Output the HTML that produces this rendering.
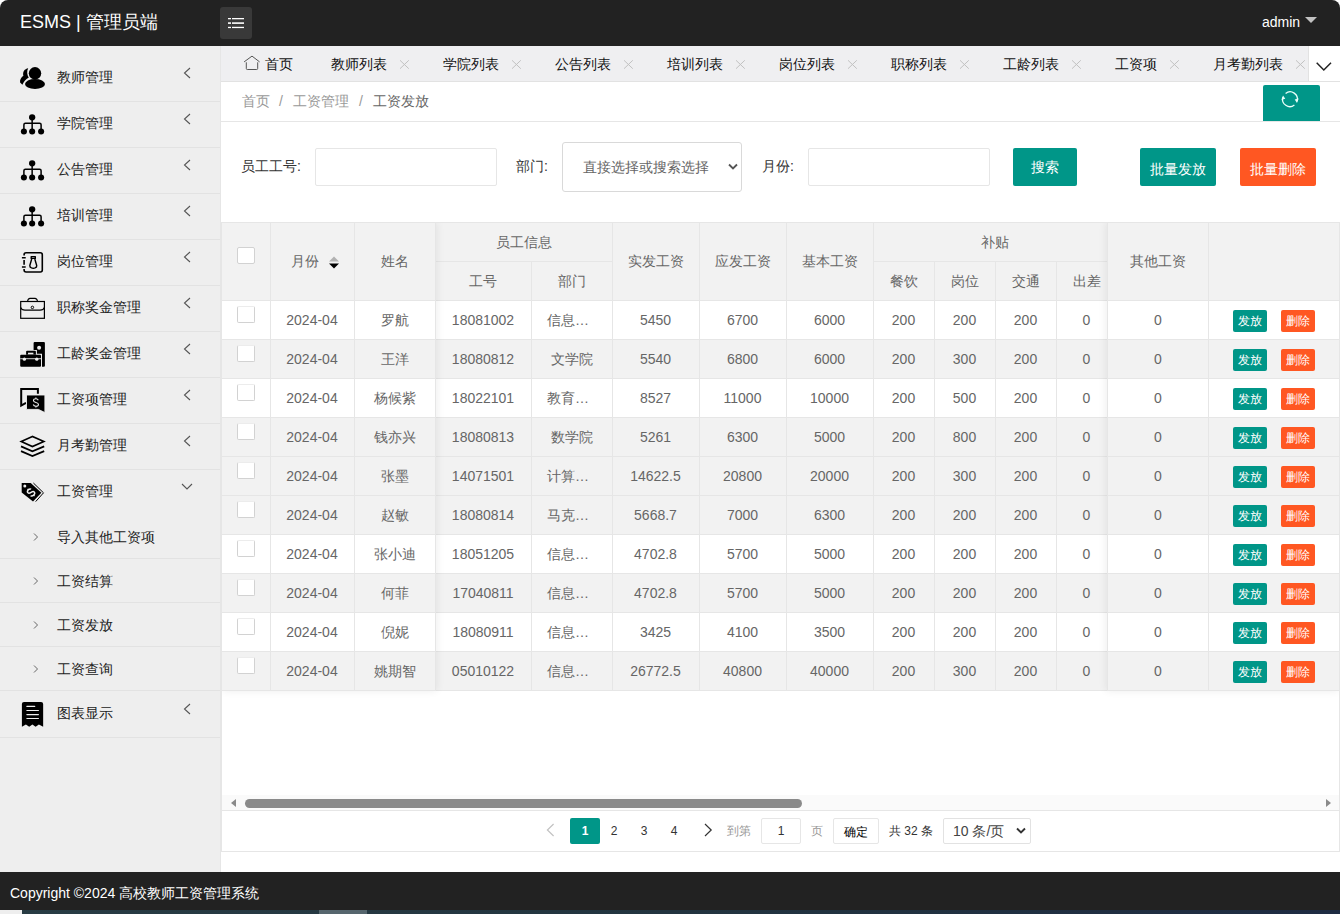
<!DOCTYPE html><html><head><meta charset="utf-8"><title>ESMS</title><style>
*{margin:0;padding:0;box-sizing:border-box}
html,body{width:1340px;height:914px;overflow:hidden;background:#fff;font-family:"Liberation Sans",sans-serif;font-size:14px;color:#333}
.abs{position:absolute}
.t{position:absolute;white-space:nowrap}
#hdr{left:0;top:0;width:1340px;height:46px;background:#222;border-radius:8px 8px 0 0}
#side{left:0;top:46px;width:220px;height:826px;background:#eee;border-right:1px solid #e6e6e6;width:221px}
.ln{position:absolute;height:1px;background:#e2e2e2}
.vl{position:absolute;width:1px;background:#e6e6e6}
#tabs{left:221px;top:46px;width:1119px;height:36px;background:#efeff1;border-bottom:1px solid #e2e2e2}
.inp{position:absolute;background:#fff;border:1px solid #e6e6e6;border-radius:2px}
.btn{position:absolute;color:#fff;text-align:center;border-radius:2px;background:#009688;white-space:nowrap}
.c{position:absolute;text-align:center;white-space:nowrap;color:#666;overflow:hidden}
.cb{position:absolute;width:18px;height:17px;border:1px solid #d2d2d2;background:#fff;border-radius:2px}
.sb{position:absolute;width:34px;height:22px;line-height:22px;font-size:12px;color:#fff;text-align:center;border-radius:2px}
</style></head><body><div id="hdr" class="abs"></div><div class="t" style="left:20px;top:0;line-height:44px;color:#fff;font-size:18px">ESMS | 管理员端</div><div class="abs" style="left:220px;top:7px;width:32px;height:32px;background:#393939;border-radius:3px"></div><svg class="abs" style="left:220px;top:7px" width="32" height="32"><g fill="#fff"><rect x="8" y="11" width="3" height="1.3"/><rect x="12" y="11" width="12" height="1.3"/><rect x="8" y="15.3" width="3" height="1.6"/><rect x="12" y="15.3" width="12" height="1.6"/><rect x="8" y="19.8" width="3" height="1.3"/><rect x="12" y="19.8" width="12" height="1.3"/></g></svg><div class="t" style="left:1262px;top:0;line-height:45px;color:#fff;font-size:14px">admin</div><div class="abs" style="left:1305px;top:17px;width:0;height:0;border-left:6px solid transparent;border-right:6px solid transparent;border-top:6px solid #c2c2c2"></div><div id="side" class="abs"></div><div class="t" style="left:57px;top:55px;line-height:45px;color:#222">教师管理</div><div class="ln" style="left:0;top:101px;width:220px"></div><div class="t" style="left:57px;top:101px;line-height:45px;color:#222">学院管理</div><div class="ln" style="left:0;top:147px;width:220px"></div><div class="t" style="left:57px;top:147px;line-height:45px;color:#222">公告管理</div><div class="ln" style="left:0;top:193px;width:220px"></div><div class="t" style="left:57px;top:193px;line-height:45px;color:#222">培训管理</div><div class="ln" style="left:0;top:239px;width:220px"></div><div class="t" style="left:57px;top:239px;line-height:45px;color:#222">岗位管理</div><div class="ln" style="left:0;top:285px;width:220px"></div><div class="t" style="left:57px;top:285px;line-height:45px;color:#222">职称奖金管理</div><div class="ln" style="left:0;top:331px;width:220px"></div><div class="t" style="left:57px;top:331px;line-height:45px;color:#222">工龄奖金管理</div><div class="ln" style="left:0;top:377px;width:220px"></div><div class="t" style="left:57px;top:377px;line-height:45px;color:#222">工资项管理</div><div class="ln" style="left:0;top:423px;width:220px"></div><div class="t" style="left:57px;top:423px;line-height:45px;color:#222">月考勤管理</div><div class="ln" style="left:0;top:469px;width:220px"></div><div class="t" style="left:57px;top:469px;line-height:45px;color:#222">工资管理</div><div class="t" style="left:57px;top:691px;line-height:45px;color:#222">图表显示</div><div class="ln" style="left:0;top:737px;width:220px"></div><div class="t" style="left:57px;top:515px;line-height:44px;color:#222">导入其他工资项</div><div class="ln" style="left:0;top:558px;width:220px"></div><div class="t" style="left:57px;top:559px;line-height:44px;color:#222">工资结算</div><div class="ln" style="left:0;top:602px;width:220px"></div><div class="t" style="left:57px;top:603px;line-height:44px;color:#222">工资发放</div><div class="ln" style="left:0;top:646px;width:220px"></div><div class="t" style="left:57px;top:647px;line-height:44px;color:#222">工资查询</div><div class="ln" style="left:0;top:690px;width:220px"></div><svg class="abs" style="left:0;top:0" width="221" height="872"><path d="M190 68 L184.5 73 L190 78" fill="none" stroke="#555" stroke-width="1.1"/><path d="M190 114 L184.5 119 L190 124" fill="none" stroke="#555" stroke-width="1.1"/><path d="M190 160 L184.5 165 L190 170" fill="none" stroke="#555" stroke-width="1.1"/><path d="M190 206 L184.5 211 L190 216" fill="none" stroke="#555" stroke-width="1.1"/><path d="M190 252 L184.5 257 L190 262" fill="none" stroke="#555" stroke-width="1.1"/><path d="M190 298 L184.5 303 L190 308" fill="none" stroke="#555" stroke-width="1.1"/><path d="M190 344 L184.5 349 L190 354" fill="none" stroke="#555" stroke-width="1.1"/><path d="M190 390 L184.5 395 L190 400" fill="none" stroke="#555" stroke-width="1.1"/><path d="M190 436 L184.5 441 L190 446" fill="none" stroke="#555" stroke-width="1.1"/><path d="M182 484 L187 489 L192 484" fill="none" stroke="#555" stroke-width="1.1"/><path d="M190 704 L184.5 709 L190 714" fill="none" stroke="#555" stroke-width="1.1"/><path d="M34 533.5 L37.5 537 L34 540.5" fill="none" stroke="#666" stroke-width="1"/><path d="M34 577.5 L37.5 581 L34 584.5" fill="none" stroke="#666" stroke-width="1"/><path d="M34 621.5 L37.5 625 L34 628.5" fill="none" stroke="#666" stroke-width="1"/><path d="M34 665.5 L37.5 669 L34 672.5" fill="none" stroke="#666" stroke-width="1"/><path d="M28.2 68.2 C24.6 68.8 22.4 71.8 23.4 75.8 C21.2 77.2 19.6 79.8 20.1 82.6 L22.4 84.8 C23.6 82 25.6 79.6 28.8 77.6 C27 75 26.6 71 28.2 68.2 Z" fill="#000"/><g fill="#eee" stroke="#eee" stroke-width="1.8"><circle cx="35" cy="73.3" r="6.2"/><ellipse cx="35" cy="84" rx="10" ry="5.1"/></g><g fill="#000"><circle cx="35" cy="73.3" r="6.2"/><ellipse cx="35" cy="84" rx="10" ry="5.1"/></g><circle cx="32.15" cy="117.3" r="3.15" fill="#000"/><path d="M32.15 117.3 V131.45 M23.9 131.45 V124.7 Q23.9 123.2 25.4 123.2 H39.6 Q41.1 123.2 41.1 124.7 V131.45" fill="none" stroke="#000" stroke-width="1.5"/><circle cx="23.9" cy="131.45" r="3.05" fill="#000"/><circle cx="32.15" cy="131.45" r="3.05" fill="#000"/><circle cx="41.1" cy="131.45" r="3.05" fill="#000"/><circle cx="32.15" cy="163.3" r="3.15" fill="#000"/><path d="M32.15 163.3 V177.45 M23.9 177.45 V170.7 Q23.9 169.2 25.4 169.2 H39.6 Q41.1 169.2 41.1 170.7 V177.45" fill="none" stroke="#000" stroke-width="1.5"/><circle cx="23.9" cy="177.45" r="3.05" fill="#000"/><circle cx="32.15" cy="177.45" r="3.05" fill="#000"/><circle cx="41.1" cy="177.45" r="3.05" fill="#000"/><circle cx="32.15" cy="209.3" r="3.15" fill="#000"/><path d="M32.15 209.3 V223.45 M23.9 223.45 V216.7 Q23.9 215.2 25.4 215.2 H39.6 Q41.1 215.2 41.1 216.7 V223.45" fill="none" stroke="#000" stroke-width="1.5"/><circle cx="23.9" cy="223.45" r="3.05" fill="#000"/><circle cx="32.15" cy="223.45" r="3.05" fill="#000"/><circle cx="41.1" cy="223.45" r="3.05" fill="#000"/><path d="M24.1 255.5 V254.7 Q24.1 252.7 26.1 252.7 H40.3 Q42.3 252.7 42.3 254.7 V270 Q42.3 272 40.3 272 H26.1 Q24.1 272 24.1 270 V269" fill="none" stroke="#000" stroke-width="1.6"/><path d="M24.1 260 V264.8" fill="none" stroke="#000" stroke-width="1.6"/><path d="M21.9 257.8 H25.7 M21.9 267 H25.7" fill="none" stroke="#000" stroke-width="1.6"/><path d="M31.2 256.6 H35.3 V258.4 H31.2 Z M31.7 259 L29.8 265.5 Q29.6 267.2 31.5 267.8 L33.3 268.3 L35.1 267.8 Q37 267.2 36.7 265.5 L34.8 259" fill="none" stroke="#000" stroke-width="1.4" stroke-linejoin="round"/><rect x="20.7" y="301.5" width="23.7" height="16.8" fill="none" stroke="#000" stroke-width="1.2"/><path d="M27.5 301.5 Q28 298.4 30 298.4 H35 Q37 298.4 37.6 301.5" fill="none" stroke="#000" stroke-width="1.1"/><path d="M20.7 307.5 Q21.5 310.1 25 310.1 H40 Q43.6 310.1 44.4 307.5" fill="none" stroke="#000" stroke-width="1.1"/><circle cx="32.4" cy="307.4" r="1.25" fill="none" stroke="#000" stroke-width="1"/><rect x="33.6" y="342.1" width="11.3" height="24.7" rx="1" fill="#000"/><circle cx="39.1" cy="347.8" r="2" fill="#eee"/><path d="M25.1 350 H36.9 V353.7 H42 V367.8 H19.2 V353.7 H25.1 Z" fill="#eee"/><rect x="20.2" y="354.7" width="20.8" height="12.1" rx="1" fill="#000"/><path d="M26.1 354.7 V351.7 Q26.1 350.7 27.1 350.7 H34.9 Q35.9 350.7 35.9 351.7 V354.7 Z" fill="#000"/><rect x="28" y="352.7" width="5.4" height="1.6" fill="#eee"/><rect x="20.2" y="358.3" width="20.8" height="0.9" fill="#eee"/><circle cx="24.4" cy="359.2" r="1.6" fill="#eee"/><circle cx="36.8" cy="359.2" r="1.6" fill="#eee"/><path d="M37.9 393.7 V388.9 H21.2 V405.5 L26 402.8" fill="none" stroke="#000" stroke-width="2"/><path d="M26.5 395 H44.9 V412.6 L38.4 409.4 H26.5 Z" fill="#000" stroke="#eee" stroke-width="0.9"/><path d="M2.5 -2.3 C2.1 -3.4 1.2 -3.9 0 -3.9 C-1.5 -3.9 -2.6 -3.1 -2.6 -1.9 C-2.6 -0.6 -1.5 -0.2 0 0.1 C1.6 0.4 2.7 0.9 2.7 2.1 C2.7 3.4 1.6 4 0 4 C-1.4 4 -2.4 3.4 -2.8 2.2 M0 -5.2 V-3.9 M0 4 V5.3" fill="none" stroke="#eee" stroke-width="1.15" transform="translate(35.9 402.4) scale(0.95)"/><path d="M32.4 436.4 L21.2 441.4 L32.4 446.6 L43.9 441.4 Z" fill="none" stroke="#000" stroke-width="1.6" stroke-linejoin="miter"/><path d="M21 446.4 L32.4 451.3 L44.2 446.4" fill="none" stroke="#000" stroke-width="1.8"/><path d="M21 451.2 L32.4 456.1 L44.2 451.2" fill="none" stroke="#000" stroke-width="1.8"/><path d="M33.4 483 L43.5 492.8 L35.7 501.6" fill="none" stroke="#000" stroke-width="1"/><path d="M21.7 483 H30.7 L41.4 492.8 L33 501.6 L21.7 492.4 Z" fill="#000"/><circle cx="24.8" cy="485.9" r="1.5" fill="#eee"/><path d="M2.5 -2.3 C2.1 -3.4 1.2 -3.9 0 -3.9 C-1.5 -3.9 -2.6 -3.1 -2.6 -1.9 C-2.6 -0.6 -1.5 -0.2 0 0.1 C1.6 0.4 2.7 0.9 2.7 2.1 C2.7 3.4 1.6 4 0 4 C-1.4 4 -2.4 3.4 -2.8 2.2 M0 -5.2 V-3.9 M0 4 V5.3" fill="none" stroke="#eee" stroke-width="1.5" transform="translate(31 492.4) rotate(-45) scale(0.95)"/><path d="M21.9 726.8 V704 Q21.9 701.9 24 701.9 H41 Q43.15 701.9 43.15 704 V726.8 L38.9 724.5 L35.6 726.8 L32.4 724.5 L29.2 726.8 L25.9 724.5 Z" fill="#000"/><rect x="26.3" y="705.8" width="8.999999999999996" height="1.2" rx="0.6" fill="#eee"/><rect x="26.3" y="709.9" width="12.7" height="1.2" rx="0.6" fill="#eee"/><rect x="26.3" y="714.0" width="12.7" height="1.2" rx="0.6" fill="#eee"/><rect x="26.3" y="717.9" width="12.7" height="1.2" rx="0.6" fill="#eee"/></svg><div id="tabs" class="abs"></div><svg class="abs" style="left:0;top:0" width="270" height="82"><path d="M244.1 61.9 L252 56.1 L259.6 61.9 M246.3 62.3 V68.5 Q246.3 69.5 247.3 69.5 H256.7 Q257.7 69.5 257.7 68.5 V62.3" fill="none" stroke="#555" stroke-width="1"/></svg><div class="t" style="left:265px;top:47px;line-height:35px;color:#111">首页</div><div class="t" style="left:331px;top:47px;line-height:35px;color:#111">教师列表</div><div class="t" style="left:443px;top:47px;line-height:35px;color:#111">学院列表</div><div class="t" style="left:555px;top:47px;line-height:35px;color:#111">公告列表</div><div class="t" style="left:667px;top:47px;line-height:35px;color:#111">培训列表</div><div class="t" style="left:779px;top:47px;line-height:35px;color:#111">岗位列表</div><div class="t" style="left:891px;top:47px;line-height:35px;color:#111">职称列表</div><div class="t" style="left:1003px;top:47px;line-height:35px;color:#111">工龄列表</div><div class="t" style="left:1115px;top:47px;line-height:35px;color:#111">工资项</div><div class="t" style="left:1213px;top:47px;line-height:35px;color:#111">月考勤列表</div><svg class="abs" style="left:0;top:0" width="1340" height="82"><path d="M400 60.3 L408.8 68.7 M408.8 60.3 L400 68.7" stroke="#c2c2c2" stroke-width="1"/><path d="M512 60.3 L520.8 68.7 M520.8 60.3 L512 68.7" stroke="#c2c2c2" stroke-width="1"/><path d="M624 60.3 L632.8 68.7 M632.8 60.3 L624 68.7" stroke="#c2c2c2" stroke-width="1"/><path d="M736 60.3 L744.8 68.7 M744.8 60.3 L736 68.7" stroke="#c2c2c2" stroke-width="1"/><path d="M848 60.3 L856.8 68.7 M856.8 60.3 L848 68.7" stroke="#c2c2c2" stroke-width="1"/><path d="M960 60.3 L968.8 68.7 M968.8 60.3 L960 68.7" stroke="#c2c2c2" stroke-width="1"/><path d="M1072 60.3 L1080.8 68.7 M1080.8 60.3 L1072 68.7" stroke="#c2c2c2" stroke-width="1"/><path d="M1170 60.3 L1178.8 68.7 M1178.8 60.3 L1170 68.7" stroke="#c2c2c2" stroke-width="1"/><path d="M1296 60.3 L1304.8 68.7 M1304.8 60.3 L1296 68.7" stroke="#c2c2c2" stroke-width="1"/></svg><div class="abs" style="left:1308px;top:46px;width:32px;height:35px;background:#fff;border-left:1px solid #e2e2e2"></div><svg class="abs" style="left:1309px;top:46px" width="31" height="36"><path d="M7.7 16.7 L14.8 24 L22 16.7" fill="none" stroke="#222" stroke-width="1.5"/></svg><div class="abs" style="left:221px;top:121px;width:1119px;height:1px;background:#e6e6e6"></div><div class="t" style="left:242px;top:82px;line-height:39px;color:#999">首页</div><div class="t" style="left:279px;top:82px;line-height:39px;color:#999">/</div><div class="t" style="left:293px;top:82px;line-height:39px;color:#999">工资管理</div><div class="t" style="left:359px;top:82px;line-height:39px;color:#999">/</div><div class="t" style="left:373px;top:82px;line-height:39px;color:#666">工资发放</div><div class="abs" style="left:1263px;top:85px;width:57px;height:36px;background:#009688;border-radius:2px 2px 0 0"></div><svg class="abs" style="left:1263px;top:85px" width="57" height="36"><g fill="none" stroke="#eafffa" stroke-width="1.3"><path d="M22.6 8.4 A7.3 7.3 0 0 1 34.1 16.2"/><path d="M31.4 20.0 A7.3 7.3 0 0 1 19.9 12.2"/></g><path d="M31.7 14.6 L35.6 13.6 L34.0 18.0 Z M22.3 13.8 L18.4 14.8 L20.0 10.4 Z" fill="#eafffa"/></svg><div class="t" style="left:241px;top:156px;line-height:20px;color:#333">员工工号:</div><div class="inp" style="left:315px;top:148px;width:182px;height:38px"></div><div class="t" style="left:516px;top:156px;line-height:20px;color:#333">部门:</div><div class="inp" style="left:562px;top:142px;width:180px;height:50px;border-color:#d9d9d9;border-radius:3px"></div><div class="t" style="left:583px;top:157px;line-height:20px;color:#666">直接选择或搜索选择</div><svg class="abs" style="left:726px;top:160px" width="14" height="14"><path d="M3 4.5 L7 8.5 L11 4.5" fill="none" stroke="#555" stroke-width="1.8"/></svg><div class="t" style="left:762px;top:156px;line-height:20px;color:#333">月份:</div><div class="inp" style="left:808px;top:148px;width:182px;height:38px"></div><div class="btn" style="left:1013px;top:148px;width:64px;height:38px;line-height:38px">搜索</div><div class="btn" style="left:1140px;top:148px;width:76px;height:38px;line-height:42px">批量发放</div><div class="btn" style="left:1240px;top:148px;width:76px;height:38px;line-height:42px;background:#FF5722">批量删除</div><div class="abs" style="left:221px;top:222px;width:1119px;height:79px;background:#f2f2f2;border-top:1px solid #e6e6e6;border-bottom:1px solid #e6e6e6"></div><div class="abs" style="left:221px;top:301px;width:1119px;height:39px;background:#fff;border-bottom:1px solid #e6e6e6"></div><div class="abs" style="left:221px;top:340px;width:1119px;height:39px;background:#f2f2f2;border-bottom:1px solid #e6e6e6"></div><div class="abs" style="left:221px;top:379px;width:1119px;height:39px;background:#fff;border-bottom:1px solid #e6e6e6"></div><div class="abs" style="left:221px;top:418px;width:1119px;height:39px;background:#f2f2f2;border-bottom:1px solid #e6e6e6"></div><div class="abs" style="left:221px;top:457px;width:1119px;height:39px;background:#f2f2f2;border-bottom:1px solid #e6e6e6"></div><div class="abs" style="left:221px;top:496px;width:1119px;height:39px;background:#f2f2f2;border-bottom:1px solid #e6e6e6"></div><div class="abs" style="left:221px;top:535px;width:1119px;height:39px;background:#fff;border-bottom:1px solid #e6e6e6"></div><div class="abs" style="left:221px;top:574px;width:1119px;height:39px;background:#f2f2f2;border-bottom:1px solid #e6e6e6"></div><div class="abs" style="left:221px;top:613px;width:1119px;height:39px;background:#fff;border-bottom:1px solid #e6e6e6"></div><div class="abs" style="left:221px;top:652px;width:1119px;height:39px;background:#f2f2f2;border-bottom:1px solid #e6e6e6"></div><div class="vl" style="left:270px;top:222px;height:468px"></div><div class="vl" style="left:354px;top:222px;height:468px"></div><div class="vl" style="left:435px;top:222px;height:468px"></div><div class="vl" style="left:531px;top:261px;height:429px"></div><div class="vl" style="left:612px;top:222px;height:468px"></div><div class="vl" style="left:699px;top:222px;height:468px"></div><div class="vl" style="left:786px;top:222px;height:468px"></div><div class="vl" style="left:873px;top:222px;height:468px"></div><div class="vl" style="left:934px;top:261px;height:429px"></div><div class="vl" style="left:995px;top:261px;height:429px"></div><div class="vl" style="left:1056px;top:261px;height:429px"></div><div class="vl" style="left:1117px;top:222px;height:468px"></div><div class="abs" style="left:435px;top:261px;width:177px;height:1px;background:#e6e6e6"></div><div class="abs" style="left:873px;top:261px;width:234px;height:1px;background:#e6e6e6"></div><div class="c" style="left:354px;top:223px;width:81px;height:77px;line-height:77px;">姓名</div><div class="c" style="left:435px;top:223px;width:177px;height:38px;line-height:38px;">员工信息</div><div class="c" style="left:435px;top:262px;width:96px;height:38px;line-height:38px;">工号</div><div class="c" style="left:531px;top:262px;width:81px;height:38px;line-height:38px;">部门</div><div class="c" style="left:612px;top:223px;width:87px;height:77px;line-height:77px;">实发工资</div><div class="c" style="left:699px;top:223px;width:87px;height:77px;line-height:77px;">应发工资</div><div class="c" style="left:786px;top:223px;width:87px;height:77px;line-height:77px;">基本工资</div><div class="c" style="left:873px;top:223px;width:244px;height:38px;line-height:38px;">补贴</div><div class="c" style="left:873px;top:262px;width:61px;height:38px;line-height:38px;">餐饮</div><div class="c" style="left:934px;top:262px;width:61px;height:38px;line-height:38px;">岗位</div><div class="c" style="left:995px;top:262px;width:61px;height:38px;line-height:38px;">交通</div><div class="c" style="left:1056px;top:262px;width:61px;height:38px;line-height:38px;">出差</div><div class="t" style="left:291px;top:251px;line-height:20px;color:#666">月份</div><svg class="abs" style="left:326px;top:255px" width="16" height="16"><path d="M3 6.5 L8 1.5 L13 6.5 Z" fill="#b2b2b2"/><path d="M3 8.5 L8 13.5 L13 8.5 Z" fill="#000"/></svg><div class="cb" style="left:237px;top:247px"></div><div class="cb" style="left:237px;top:306px;border-top-color:#ececec"></div><div class="c" style="left:270px;top:301px;width:84px;height:38px;line-height:38px;">2024-04</div><div class="c" style="left:354px;top:301px;width:81px;height:38px;line-height:38px;">罗航</div><div class="c" style="left:435px;top:301px;width:96px;height:38px;line-height:38px;">18081002</div><div class="t" style="left:547px;top:301px;line-height:38px;color:#666">信息…</div><div class="c" style="left:612px;top:301px;width:87px;height:38px;line-height:38px;">5450</div><div class="c" style="left:699px;top:301px;width:87px;height:38px;line-height:38px;">6700</div><div class="c" style="left:786px;top:301px;width:87px;height:38px;line-height:38px;">6000</div><div class="c" style="left:873px;top:301px;width:61px;height:38px;line-height:38px;">200</div><div class="c" style="left:934px;top:301px;width:61px;height:38px;line-height:38px;">200</div><div class="c" style="left:995px;top:301px;width:61px;height:38px;line-height:38px;">200</div><div class="c" style="left:1056px;top:301px;width:61px;height:38px;line-height:38px;">0</div><div class="cb" style="left:237px;top:345px;border-top-color:#ececec"></div><div class="c" style="left:270px;top:340px;width:84px;height:38px;line-height:38px;">2024-04</div><div class="c" style="left:354px;top:340px;width:81px;height:38px;line-height:38px;">王洋</div><div class="c" style="left:435px;top:340px;width:96px;height:38px;line-height:38px;">18080812</div><div class="c" style="left:531px;top:340px;width:81px;height:38px;line-height:38px;">文学院</div><div class="c" style="left:612px;top:340px;width:87px;height:38px;line-height:38px;">5540</div><div class="c" style="left:699px;top:340px;width:87px;height:38px;line-height:38px;">6800</div><div class="c" style="left:786px;top:340px;width:87px;height:38px;line-height:38px;">6000</div><div class="c" style="left:873px;top:340px;width:61px;height:38px;line-height:38px;">200</div><div class="c" style="left:934px;top:340px;width:61px;height:38px;line-height:38px;">300</div><div class="c" style="left:995px;top:340px;width:61px;height:38px;line-height:38px;">200</div><div class="c" style="left:1056px;top:340px;width:61px;height:38px;line-height:38px;">0</div><div class="cb" style="left:237px;top:384px;border-top-color:#ececec"></div><div class="c" style="left:270px;top:379px;width:84px;height:38px;line-height:38px;">2024-04</div><div class="c" style="left:354px;top:379px;width:81px;height:38px;line-height:38px;">杨候紫</div><div class="c" style="left:435px;top:379px;width:96px;height:38px;line-height:38px;">18022101</div><div class="t" style="left:547px;top:379px;line-height:38px;color:#666">教育…</div><div class="c" style="left:612px;top:379px;width:87px;height:38px;line-height:38px;">8527</div><div class="c" style="left:699px;top:379px;width:87px;height:38px;line-height:38px;">11000</div><div class="c" style="left:786px;top:379px;width:87px;height:38px;line-height:38px;">10000</div><div class="c" style="left:873px;top:379px;width:61px;height:38px;line-height:38px;">200</div><div class="c" style="left:934px;top:379px;width:61px;height:38px;line-height:38px;">500</div><div class="c" style="left:995px;top:379px;width:61px;height:38px;line-height:38px;">200</div><div class="c" style="left:1056px;top:379px;width:61px;height:38px;line-height:38px;">0</div><div class="cb" style="left:237px;top:423px;border-top-color:#ececec"></div><div class="c" style="left:270px;top:418px;width:84px;height:38px;line-height:38px;">2024-04</div><div class="c" style="left:354px;top:418px;width:81px;height:38px;line-height:38px;">钱亦兴</div><div class="c" style="left:435px;top:418px;width:96px;height:38px;line-height:38px;">18080813</div><div class="c" style="left:531px;top:418px;width:81px;height:38px;line-height:38px;">数学院</div><div class="c" style="left:612px;top:418px;width:87px;height:38px;line-height:38px;">5261</div><div class="c" style="left:699px;top:418px;width:87px;height:38px;line-height:38px;">6300</div><div class="c" style="left:786px;top:418px;width:87px;height:38px;line-height:38px;">5000</div><div class="c" style="left:873px;top:418px;width:61px;height:38px;line-height:38px;">200</div><div class="c" style="left:934px;top:418px;width:61px;height:38px;line-height:38px;">800</div><div class="c" style="left:995px;top:418px;width:61px;height:38px;line-height:38px;">200</div><div class="c" style="left:1056px;top:418px;width:61px;height:38px;line-height:38px;">0</div><div class="cb" style="left:237px;top:462px;border-top-color:#ececec"></div><div class="c" style="left:270px;top:457px;width:84px;height:38px;line-height:38px;">2024-04</div><div class="c" style="left:354px;top:457px;width:81px;height:38px;line-height:38px;">张墨</div><div class="c" style="left:435px;top:457px;width:96px;height:38px;line-height:38px;">14071501</div><div class="t" style="left:547px;top:457px;line-height:38px;color:#666">计算…</div><div class="c" style="left:612px;top:457px;width:87px;height:38px;line-height:38px;">14622.5</div><div class="c" style="left:699px;top:457px;width:87px;height:38px;line-height:38px;">20800</div><div class="c" style="left:786px;top:457px;width:87px;height:38px;line-height:38px;">20000</div><div class="c" style="left:873px;top:457px;width:61px;height:38px;line-height:38px;">200</div><div class="c" style="left:934px;top:457px;width:61px;height:38px;line-height:38px;">300</div><div class="c" style="left:995px;top:457px;width:61px;height:38px;line-height:38px;">200</div><div class="c" style="left:1056px;top:457px;width:61px;height:38px;line-height:38px;">0</div><div class="cb" style="left:237px;top:501px;border-top-color:#ececec"></div><div class="c" style="left:270px;top:496px;width:84px;height:38px;line-height:38px;">2024-04</div><div class="c" style="left:354px;top:496px;width:81px;height:38px;line-height:38px;">赵敏</div><div class="c" style="left:435px;top:496px;width:96px;height:38px;line-height:38px;">18080814</div><div class="t" style="left:547px;top:496px;line-height:38px;color:#666">马克…</div><div class="c" style="left:612px;top:496px;width:87px;height:38px;line-height:38px;">5668.7</div><div class="c" style="left:699px;top:496px;width:87px;height:38px;line-height:38px;">7000</div><div class="c" style="left:786px;top:496px;width:87px;height:38px;line-height:38px;">6300</div><div class="c" style="left:873px;top:496px;width:61px;height:38px;line-height:38px;">200</div><div class="c" style="left:934px;top:496px;width:61px;height:38px;line-height:38px;">200</div><div class="c" style="left:995px;top:496px;width:61px;height:38px;line-height:38px;">200</div><div class="c" style="left:1056px;top:496px;width:61px;height:38px;line-height:38px;">0</div><div class="cb" style="left:237px;top:540px;border-top-color:#ececec"></div><div class="c" style="left:270px;top:535px;width:84px;height:38px;line-height:38px;">2024-04</div><div class="c" style="left:354px;top:535px;width:81px;height:38px;line-height:38px;">张小迪</div><div class="c" style="left:435px;top:535px;width:96px;height:38px;line-height:38px;">18051205</div><div class="t" style="left:547px;top:535px;line-height:38px;color:#666">信息…</div><div class="c" style="left:612px;top:535px;width:87px;height:38px;line-height:38px;">4702.8</div><div class="c" style="left:699px;top:535px;width:87px;height:38px;line-height:38px;">5700</div><div class="c" style="left:786px;top:535px;width:87px;height:38px;line-height:38px;">5000</div><div class="c" style="left:873px;top:535px;width:61px;height:38px;line-height:38px;">200</div><div class="c" style="left:934px;top:535px;width:61px;height:38px;line-height:38px;">200</div><div class="c" style="left:995px;top:535px;width:61px;height:38px;line-height:38px;">200</div><div class="c" style="left:1056px;top:535px;width:61px;height:38px;line-height:38px;">0</div><div class="cb" style="left:237px;top:579px;border-top-color:#ececec"></div><div class="c" style="left:270px;top:574px;width:84px;height:38px;line-height:38px;">2024-04</div><div class="c" style="left:354px;top:574px;width:81px;height:38px;line-height:38px;">何菲</div><div class="c" style="left:435px;top:574px;width:96px;height:38px;line-height:38px;">17040811</div><div class="t" style="left:547px;top:574px;line-height:38px;color:#666">信息…</div><div class="c" style="left:612px;top:574px;width:87px;height:38px;line-height:38px;">4702.8</div><div class="c" style="left:699px;top:574px;width:87px;height:38px;line-height:38px;">5700</div><div class="c" style="left:786px;top:574px;width:87px;height:38px;line-height:38px;">5000</div><div class="c" style="left:873px;top:574px;width:61px;height:38px;line-height:38px;">200</div><div class="c" style="left:934px;top:574px;width:61px;height:38px;line-height:38px;">200</div><div class="c" style="left:995px;top:574px;width:61px;height:38px;line-height:38px;">200</div><div class="c" style="left:1056px;top:574px;width:61px;height:38px;line-height:38px;">0</div><div class="cb" style="left:237px;top:618px;border-top-color:#ececec"></div><div class="c" style="left:270px;top:613px;width:84px;height:38px;line-height:38px;">2024-04</div><div class="c" style="left:354px;top:613px;width:81px;height:38px;line-height:38px;">倪妮</div><div class="c" style="left:435px;top:613px;width:96px;height:38px;line-height:38px;">18080911</div><div class="t" style="left:547px;top:613px;line-height:38px;color:#666">信息…</div><div class="c" style="left:612px;top:613px;width:87px;height:38px;line-height:38px;">3425</div><div class="c" style="left:699px;top:613px;width:87px;height:38px;line-height:38px;">4100</div><div class="c" style="left:786px;top:613px;width:87px;height:38px;line-height:38px;">3500</div><div class="c" style="left:873px;top:613px;width:61px;height:38px;line-height:38px;">200</div><div class="c" style="left:934px;top:613px;width:61px;height:38px;line-height:38px;">200</div><div class="c" style="left:995px;top:613px;width:61px;height:38px;line-height:38px;">200</div><div class="c" style="left:1056px;top:613px;width:61px;height:38px;line-height:38px;">0</div><div class="cb" style="left:237px;top:657px;border-top-color:#ececec"></div><div class="c" style="left:270px;top:652px;width:84px;height:38px;line-height:38px;">2024-04</div><div class="c" style="left:354px;top:652px;width:81px;height:38px;line-height:38px;">姚期智</div><div class="c" style="left:435px;top:652px;width:96px;height:38px;line-height:38px;">05010122</div><div class="t" style="left:547px;top:652px;line-height:38px;color:#666">信息…</div><div class="c" style="left:612px;top:652px;width:87px;height:38px;line-height:38px;">26772.5</div><div class="c" style="left:699px;top:652px;width:87px;height:38px;line-height:38px;">40800</div><div class="c" style="left:786px;top:652px;width:87px;height:38px;line-height:38px;">40000</div><div class="c" style="left:873px;top:652px;width:61px;height:38px;line-height:38px;">200</div><div class="c" style="left:934px;top:652px;width:61px;height:38px;line-height:38px;">300</div><div class="c" style="left:995px;top:652px;width:61px;height:38px;line-height:38px;">200</div><div class="c" style="left:1056px;top:652px;width:61px;height:38px;line-height:38px;">0</div><div class="abs" style="left:221px;top:222px;width:215px;height:469px;box-shadow:1px 0 8px rgba(0,0,0,.07);clip-path:inset(1px -20px -20px 0)"></div><div class="abs" style="left:1107px;top:222px;width:233px;height:469px;box-shadow:-1px 0 8px rgba(0,0,0,.07);clip-path:inset(1px 0 -20px -20px)"></div><div class="abs" style="left:1107px;top:223px;width:233px;height:78px;background:#f2f2f2;border-bottom:1px solid #e6e6e6;border-left:1px solid #e6e6e6"></div><div class="abs" style="left:1107px;top:301px;width:233px;height:39px;background:#fff;border-bottom:1px solid #e6e6e6;border-left:1px solid #e6e6e6"></div><div class="abs" style="left:1107px;top:340px;width:233px;height:39px;background:#f2f2f2;border-bottom:1px solid #e6e6e6;border-left:1px solid #e6e6e6"></div><div class="abs" style="left:1107px;top:379px;width:233px;height:39px;background:#fff;border-bottom:1px solid #e6e6e6;border-left:1px solid #e6e6e6"></div><div class="abs" style="left:1107px;top:418px;width:233px;height:39px;background:#f2f2f2;border-bottom:1px solid #e6e6e6;border-left:1px solid #e6e6e6"></div><div class="abs" style="left:1107px;top:457px;width:233px;height:39px;background:#f2f2f2;border-bottom:1px solid #e6e6e6;border-left:1px solid #e6e6e6"></div><div class="abs" style="left:1107px;top:496px;width:233px;height:39px;background:#f2f2f2;border-bottom:1px solid #e6e6e6;border-left:1px solid #e6e6e6"></div><div class="abs" style="left:1107px;top:535px;width:233px;height:39px;background:#fff;border-bottom:1px solid #e6e6e6;border-left:1px solid #e6e6e6"></div><div class="abs" style="left:1107px;top:574px;width:233px;height:39px;background:#f2f2f2;border-bottom:1px solid #e6e6e6;border-left:1px solid #e6e6e6"></div><div class="abs" style="left:1107px;top:613px;width:233px;height:39px;background:#fff;border-bottom:1px solid #e6e6e6;border-left:1px solid #e6e6e6"></div><div class="abs" style="left:1107px;top:652px;width:233px;height:39px;background:#f2f2f2;border-bottom:1px solid #e6e6e6;border-left:1px solid #e6e6e6"></div><div class="vl" style="left:1208px;top:222px;height:468px"></div><div class="c" style="left:1108px;top:223px;width:100px;height:77px;line-height:77px;">其他工资</div><div class="c" style="left:1108px;top:301px;width:100px;height:38px;line-height:38px;">0</div><div class="sb" style="left:1233px;top:310px;background:#009688">发放</div><div class="sb" style="left:1281px;top:310px;background:#FF5722">删除</div><div class="c" style="left:1108px;top:340px;width:100px;height:38px;line-height:38px;">0</div><div class="sb" style="left:1233px;top:349px;background:#009688">发放</div><div class="sb" style="left:1281px;top:349px;background:#FF5722">删除</div><div class="c" style="left:1108px;top:379px;width:100px;height:38px;line-height:38px;">0</div><div class="sb" style="left:1233px;top:388px;background:#009688">发放</div><div class="sb" style="left:1281px;top:388px;background:#FF5722">删除</div><div class="c" style="left:1108px;top:418px;width:100px;height:38px;line-height:38px;">0</div><div class="sb" style="left:1233px;top:427px;background:#009688">发放</div><div class="sb" style="left:1281px;top:427px;background:#FF5722">删除</div><div class="c" style="left:1108px;top:457px;width:100px;height:38px;line-height:38px;">0</div><div class="sb" style="left:1233px;top:466px;background:#009688">发放</div><div class="sb" style="left:1281px;top:466px;background:#FF5722">删除</div><div class="c" style="left:1108px;top:496px;width:100px;height:38px;line-height:38px;">0</div><div class="sb" style="left:1233px;top:505px;background:#009688">发放</div><div class="sb" style="left:1281px;top:505px;background:#FF5722">删除</div><div class="c" style="left:1108px;top:535px;width:100px;height:38px;line-height:38px;">0</div><div class="sb" style="left:1233px;top:544px;background:#009688">发放</div><div class="sb" style="left:1281px;top:544px;background:#FF5722">删除</div><div class="c" style="left:1108px;top:574px;width:100px;height:38px;line-height:38px;">0</div><div class="sb" style="left:1233px;top:583px;background:#009688">发放</div><div class="sb" style="left:1281px;top:583px;background:#FF5722">删除</div><div class="c" style="left:1108px;top:613px;width:100px;height:38px;line-height:38px;">0</div><div class="sb" style="left:1233px;top:622px;background:#009688">发放</div><div class="sb" style="left:1281px;top:622px;background:#FF5722">删除</div><div class="c" style="left:1108px;top:652px;width:100px;height:38px;line-height:38px;">0</div><div class="sb" style="left:1233px;top:661px;background:#009688">发放</div><div class="sb" style="left:1281px;top:661px;background:#FF5722">删除</div><div class="vl" style="left:221px;top:222px;height:630px"></div><div class="vl" style="left:1339px;top:222px;height:630px"></div><div class="abs" style="left:222px;top:795px;width:1117px;height:15px;background:#fafafa"></div><div class="abs" style="left:245px;top:798.5px;width:557px;height:9px;background:#8a8a8a;border-radius:4.5px"></div><svg class="abs" style="left:222px;top:795px" width="1117" height="15"><path d="M14 4 L9 8 L14 12 Z" fill="#8a8a8a"/><path d="M1104 4 L1109 8 L1104 12 Z" fill="#8a8a8a"/></svg><div class="abs" style="left:221px;top:810px;width:1119px;height:1px;background:#e6e6e6"></div><div class="abs" style="left:221px;top:851px;width:1119px;height:1px;background:#e6e6e6"></div><svg class="abs" style="left:540px;top:820px" width="20" height="22"><path d="M13.6 4 L7.4 10 L13.6 16" fill="none" stroke="#c2c2c2" stroke-width="1.2"/></svg><div class="abs" style="left:570px;top:818px;width:30px;height:26px;background:#009688;border-radius:2px;color:#fff;text-align:center;line-height:26px;font-size:12px;font-weight:bold">1</div><div class="c" style="left:599px;top:818px;width:30px;height:26px;line-height:26px;font-size:12px;color:#333">2</div><div class="c" style="left:629px;top:818px;width:30px;height:26px;line-height:26px;font-size:12px;color:#333">3</div><div class="c" style="left:659px;top:818px;width:30px;height:26px;line-height:26px;font-size:12px;color:#333">4</div><svg class="abs" style="left:698px;top:820px" width="20" height="22"><path d="M7 4 L13.2 10 L7 16" fill="none" stroke="#333" stroke-width="1.2"/></svg><div class="t" style="left:727px;top:818px;line-height:26px;font-size:12px;color:#999">到第</div><div class="inp" style="left:761px;top:818px;width:40px;height:26px;text-align:center;line-height:24px;font-size:12px;color:#333">1</div><div class="t" style="left:811px;top:818px;line-height:26px;font-size:12px;color:#999">页</div><div class="inp" style="left:833px;top:818px;width:46px;height:26px;text-align:center;line-height:27px;font-size:12px;color:#000">确定</div><div class="t" style="left:889px;top:818px;line-height:26px;font-size:12px;color:#333">共 32 条</div><div class="inp" style="left:943px;top:818px;width:88px;height:26px;line-height:24px;font-size:14px;color:#333;padding-left:9px;border-color:#e2e2e2;color:#444">10 条/页</div><svg class="abs" style="left:1014px;top:824px" width="14" height="14"><path d="M3 4.5 L7 8.5 L11 4.5" fill="none" stroke="#333" stroke-width="1.9"/></svg><div class="abs" style="left:0;top:872px;width:1340px;height:38px;background:#222"></div><div class="t" style="left:10px;top:872px;line-height:42px;color:#fff">Copyright ©2024 高校教师工资管理系统</div><div class="abs" style="left:0;top:910px;width:1340px;height:4px;background:linear-gradient(to right,#283c44,#22343f 50%,#1e2b42)"></div><div class="abs" style="left:0;top:910px;width:22px;height:4px;background:#eee"></div><div class="abs" style="left:319px;top:910px;width:48px;height:4px;background:#56666e"></div></body></html>
